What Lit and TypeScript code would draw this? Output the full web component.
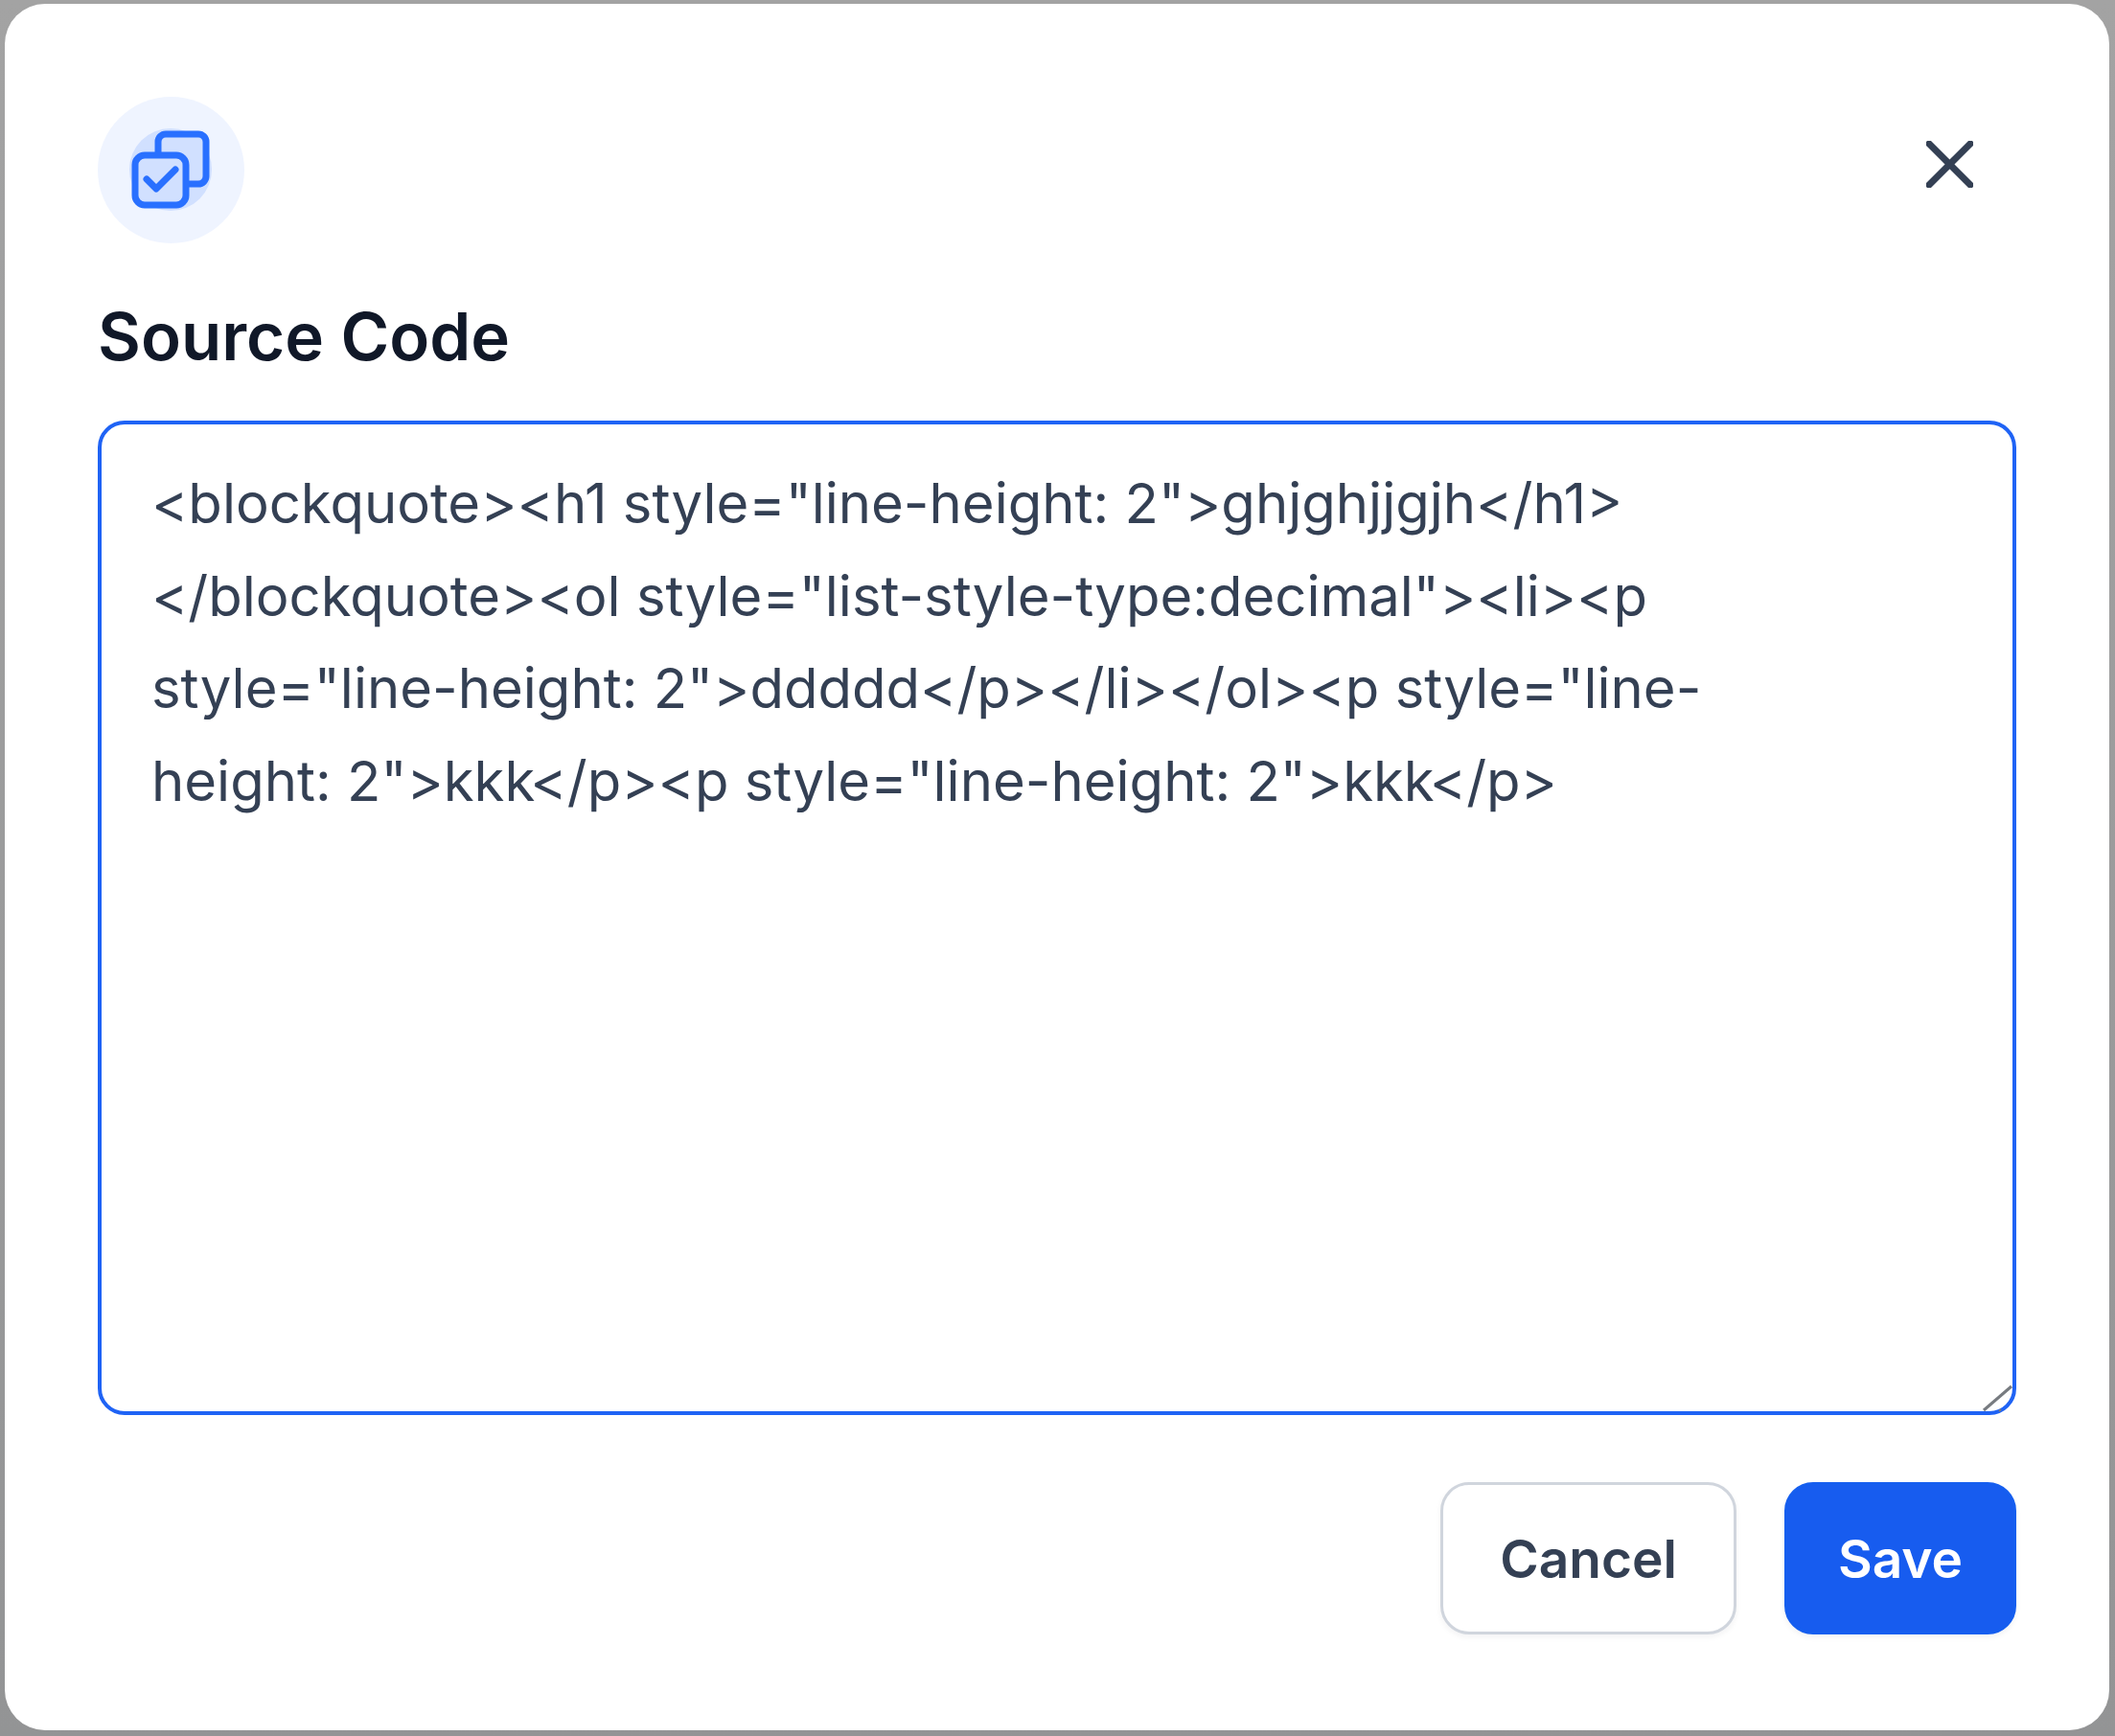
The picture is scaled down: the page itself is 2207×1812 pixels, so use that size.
import { LitElement, html, css } from "lit";
import { customElement } from "lit/decorators.js";

const SOURCE =
  '<blockquote><h1 style="line-height: 2">ghjghjjgjh</h1></blockquote><ol style="list-style-type:decimal"><li><p style="line-height: 2">ddddd</p></li></ol><p style="line-height: 2">kkk</p><p style="line-height: 2">kkk</p>';

@customElement("app-root")
export class AppRoot extends LitElement {
  static styles = css`
    :host {
      display: block;
      box-sizing: border-box;
      width: 2207px;
      height: 1812px;
      padding: 4px 6px 6px 5px;
      background: linear-gradient(#a3a3a3, #939495);
      font-family: Inter, "Liberation Sans", sans-serif;
    }
    .modal {
      box-sizing: border-box;
      height: 100%;
      background: #fff;
      border-radius: 42px;
      padding: 97px 97px 98px;
      display: flex;
      flex-direction: column;
    }
    .head {
      display: flex;
      justify-content: space-between;
      align-items: flex-start;
    }
    .badge {
      width: 153px;
      height: 153px;
      display: block;
    }
    .close {
      width: 49px;
      height: 49px;
      margin: 46px 45px 0 0;
      display: block;
    }
    h2 {
      margin: 61px 0 0;
      font-size: 69px;
      line-height: 72px;
      font-weight: 600;
      color: #101828;
    }
    .field {
      position: relative;
      margin-top: 52px;
    }
    textarea {
      display: block;
      box-sizing: border-box;
      width: 100%;
      height: 1038px;
      padding: 34px 200px 34px 52px;
      border: 4px solid #1f63f5;
      border-radius: 28px;
      outline: none;
      background: #fff;
      color: #344054;
      font-family: inherit;
      font-size: 58px;
      line-height: 96.6px;
      resize: none;
    }
    .grip {
      position: absolute;
      right: 2px;
      bottom: 2px;
      width: 34px;
      height: 32px;
      display: block;
    }
    .actions {
      display: flex;
      justify-content: flex-end;
      gap: 50px;
      margin-top: 70px;
    }
    button {
      box-sizing: border-box;
      height: 159px;
      border-radius: 30px;
      font-family: inherit;
      font-size: 55px;
      font-weight: 600;
      padding: 0;
      box-shadow: 0 3px 6px rgba(16, 24, 40, 0.05);
    }
    .cancel {
      width: 309px;
      background: #fff;
      border: 3px solid #d0d5dd;
      color: #344054;
    }
    .save {
      width: 242px;
      background: #175cef;
      border: 3px solid #155eef;
      color: #fff;
    }
  `;

  render() {
    return html`
      <div class="modal">
        <div class="head">
          <svg class="badge" viewBox="0 0 153 153" fill="none">
            <circle cx="76.5" cy="76.5" r="76.5" fill="#eff4ff" />
            <circle cx="76" cy="76" r="43" fill="#d1e0ff" />
            <path
              d="M63 61V47a8 8 0 0 1 8-8h34a8 8 0 0 1 8 8v36a8 8 0 0 1-8 8H92"
              fill="#d1e0ff"
              stroke="#2970ff"
              stroke-width="7"
              stroke-linecap="round"
              stroke-linejoin="round"
            />
            <rect x="39" y="61" width="53" height="52" rx="10" fill="#d1e0ff" stroke="#2970ff" stroke-width="7" />
            <path
              d="M51 86l10 10 20-20"
              stroke="#2970ff"
              stroke-width="7"
              stroke-linecap="round"
              stroke-linejoin="round"
            />
          </svg>
          <svg class="close" viewBox="0 0 49 49" fill="none">
            <path d="M3 3l43 43M46 3L3 46" stroke="#344054" stroke-width="7" stroke-linecap="round" />
          </svg>
        </div>
        <h2>Source Code</h2>
        <div class="field">
          <textarea .value=${SOURCE} spellcheck="false"></textarea>
          <svg class="grip" viewBox="0 0 34 32" fill="none">
            <path d="M2 29L31 4" stroke="#777b80" stroke-width="3" />
            <path d="M18 30l2-2" stroke="#777b80" stroke-width="2" />
          </svg>
        </div>
        <div class="actions">
          <button class="cancel">Cancel</button>
          <button class="save">Save</button>
        </div>
      </div>
    `;
  }
}
